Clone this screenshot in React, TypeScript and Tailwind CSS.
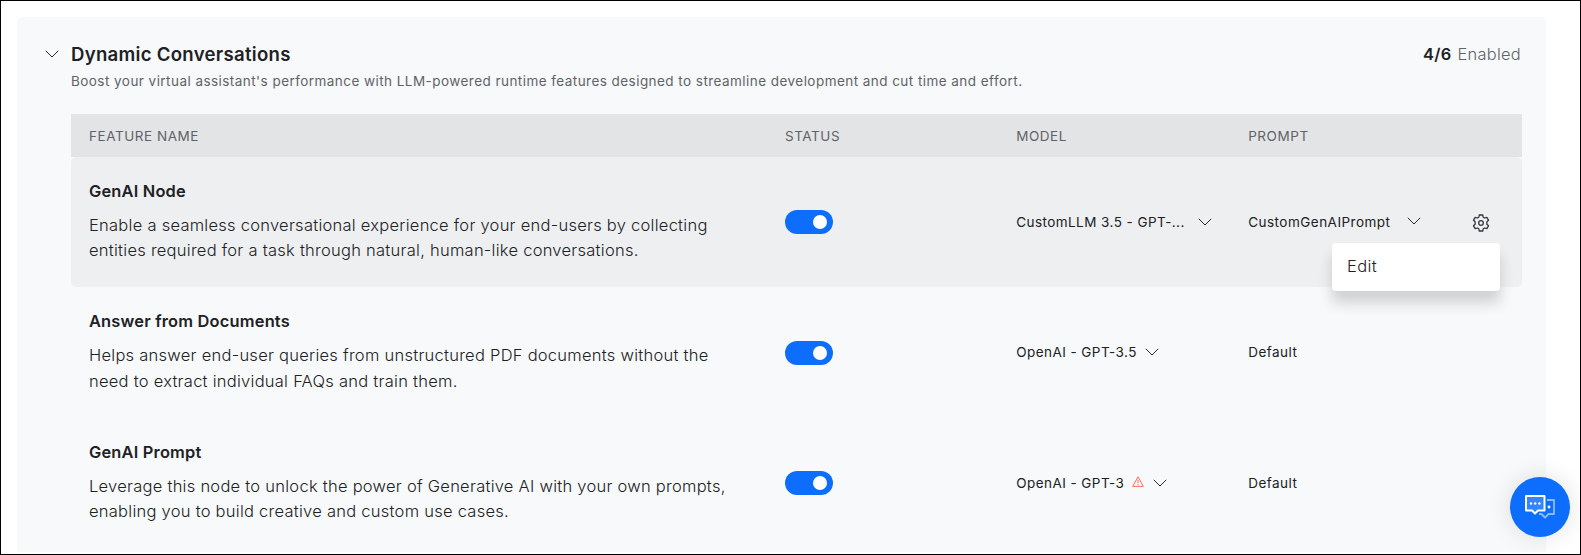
import React from "react";

type Feature = {
  name: string;
  lines: [string, string];
  model: string;
  wide?: boolean;
  warning?: boolean;
  prompt: string;
  active?: boolean;
};

const features: Feature[] = [
  {
    name: "GenAI Node",
    lines: [
      "Enable a seamless conversational experience for your end-users by collecting",
      "entities required for a task through natural, human-like conversations.",
    ],
    model: "CustomLLM 3.5 - GPT-...",
    wide: true,
    prompt: "CustomGenAIPrompt",
    active: true,
  },
  {
    name: "Answer from Documents",
    lines: [
      "Helps answer end-user queries from unstructured PDF documents without the",
      "need to extract individual FAQs and train them.",
    ],
    model: "OpenAI - GPT-3.5",
    prompt: "Default",
  },
  {
    name: "GenAI Prompt",
    lines: [
      "Leverage this node to unlock the power of Generative AI with your own prompts,",
      "enabling you to build creative and custom use cases.",
    ],
    model: "OpenAI - GPT-3",
    warning: true,
    prompt: "Default",
  },
];

const columns = "grid grid-cols-[696px_231.2px_232px_1fr] pl-[18px]";

function Chevron({ className = "" }: { className?: string }) {
  return (
    <svg className={`shrink-0 ${className}`} width="14" height="8" viewBox="0 0 14 8" fill="none" stroke="#26292d" strokeWidth="1">
      <path d="M0.8 0.8 L7 7 L13.2 0.8" />
    </svg>
  );
}

function Gear() {
  return (
    <svg width="18" height="18" viewBox="0 0 18 18" fill="none" stroke="#33373b" strokeWidth="1.3" strokeLinejoin="round">
      <path d="M7.3 1 H10.7 L11.2 3.2 L12.6 4 L14.8 3.3 L16.5 6.2 L14.9 7.8 V10.2 L16.5 11.8 L14.8 14.7 L12.6 14 L11.2 14.8 L10.7 17 H7.3 L6.8 14.8 L5.4 14 L3.2 14.7 L1.5 11.8 L3.1 10.2 V7.8 L1.5 6.2 L3.2 3.3 L5.4 4 L6.8 3.2 Z" />
      <circle cx="9" cy="9" r="2.3" />
    </svg>
  );
}

function Warning() {
  return (
    <svg className="ml-[8px] mb-[2px] shrink-0" width="12" height="11" viewBox="0 0 12 11" fill="none" stroke="#ff6b60" strokeWidth="1">
      <path d="M6 0.8 L11.3 10.4 H0.7 Z" strokeLinejoin="round" />
      <path d="M6 4 V7.3 M6 8.2 V9.2" />
    </svg>
  );
}

function Toggle() {
  return (
    <button className="flex h-6 w-12 items-center justify-end rounded-full bg-[#0d6efd] pr-[6px]">
      <span className="size-[14px] rounded-full bg-white" />
    </button>
  );
}

function FeatureRow({ f }: { f: Feature }) {
  return (
    <div className={`${columns} h-[130.4px] rounded-[5px] ${f.active ? "bg-[#eeeff1]" : ""}`}>
      <div className="pt-[23px] text-[#202124]">
        <h3 className="text-[16.4px] leading-[22px] font-semibold tracking-[0.2px]">{f.name}</h3>
        <p className="mt-[10.8px] text-[16.5px] leading-[25.5px] font-light tracking-[0.26px] whitespace-nowrap">
          {f.lines[0]}
          <br />
          {f.lines[1]}
        </p>
      </div>
      <div className="pt-[53.2px]">
        <Toggle />
      </div>
      <div className="flex h-6 items-center mt-[53.2px] text-[13.5px] text-[#202124]">
        <span className="whitespace-nowrap tracking-[0.44px]">{f.model}</span>
        {f.warning && <Warning />}
        <Chevron className={f.wide ? "ml-[13px]" : f.warning ? "ml-[9px]" : "ml-[8px] mb-[2px]"} />
      </div>
      <div className="flex h-6 items-center mt-[53.2px] text-[13.5px] text-[#202124]">
        <span className="whitespace-nowrap tracking-[0.48px]">{f.prompt}</span>
        {f.active && (
          <>
            <Chevron className="ml-[17px] mb-[2px]" />
            <button className="relative ml-auto mr-[32px] mt-px">
              <Gear />
              <div className="absolute top-[29.4px] -right-[10px] z-10 flex h-12 w-[168px] items-center rounded-[4px] bg-white pl-[15px] text-[16.5px] font-light shadow-[0_12px_14px_rgba(0,0,0,0.16)]">
                <span className="pb-px tracking-[0.4px]">Edit</span>
              </div>
            </button>
          </>
        )}
      </div>
    </div>
  );
}

function ChatIcon() {
  return (
    <svg width="32" height="26" viewBox="0 0 32 26" fill="none" strokeWidth="2" strokeLinejoin="round">
      <path d="M23 6 H30 V20 H24.5 L21 23.5 L17.5 20 H15" stroke="#8dbbff" strokeWidth="1.8" />
      <path d="M2 2 H20.5 V16.5 H14 L11 19.5 L8 16.5 H2 Z" fill="#3485fd" stroke="white" />
      <g fill="white">
        <circle cx="7" cy="9.5" r="1.2" />
        <circle cx="11.2" cy="9.5" r="1.2" />
        <circle cx="15.4" cy="9.5" r="1.2" />
        <circle cx="25" cy="13" r="1.4" />
      </g>
    </svg>
  );
}

export default function App() {
  return (
    <div className="relative h-[555px] w-[1581px] overflow-hidden border border-black bg-white px-4 pt-4 font-['Inter',sans-serif]">
      <section className="h-[535px] w-[1529px] rounded-t-[5px] bg-[#f8f9fb] pr-6 pl-[54px]">
        <header className="flex h-[97px] pt-[25px]">
          <Chevron className="-ml-[26px] mr-[12px] mt-[8px]" />
          <div>
            <h2 className="text-[18.6px] leading-6 font-semibold tracking-[0.28px] text-[#202124]">Dynamic Conversations</h2>
            <p className="mt-[6px] text-[13.5px] leading-[18px] tracking-[0.45px] text-[#5f6368] whitespace-nowrap">
              Boost your virtual assistant's performance with LLM-powered runtime features designed to streamline development and cut time and effort.
            </p>
          </div>
          <div className="ml-auto mr-px text-[16.4px] leading-6 font-light tracking-[0.28px] text-[#5f6368]">
            <span className="mr-[6px] font-semibold text-[#202124]">4/6</span>
            Enabled
          </div>
        </header>
        <div className={`${columns} h-[43px] items-center bg-[#e3e4e6] pt-[2px] text-[13.5px] tracking-[0.55px] text-[#5f6368]`}>
          <span>FEATURE NAME</span>
          <span>STATUS</span>
          <span>MODEL</span>
          <span>PROMPT</span>
        </div>
        {features.map((f) => (
          <FeatureRow key={f.name} f={f} />
        ))}
      </section>
      <button className="absolute top-[476px] left-[1509px] flex size-[60px] items-center justify-center rounded-full bg-[#0d6efd] shadow-[0_0_24px_rgba(0,0,0,0.12)]">
        <ChatIcon />
      </button>
    </div>
  );
}
